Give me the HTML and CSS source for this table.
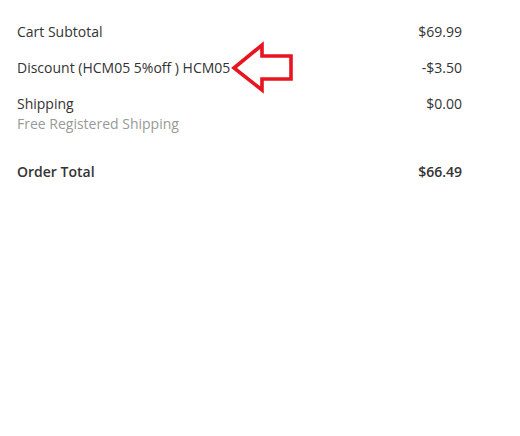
FILE: index.html
```html
<!DOCTYPE html>
<html>
<head>
<meta charset="utf-8">
<link rel="stylesheet" href="styles.css">
</head>
<body>
<div class="totals">
  <div class="row">
    <div class="label">Cart Subtotal</div>
    <div class="amount">$69.99</div>
  </div>
  <div class="row">
    <div class="label">Discount (HCM05 5%off ) HCM05</div>
    <div class="amount">-$3.50</div>
  </div>
  <div class="row">
    <div class="label">Shipping<div class="sub">Free Registered Shipping</div></div>
    <div class="amount">$0.00</div>
  </div>
  <div class="row total">
    <div class="label">Order Total</div>
    <div class="amount">$66.49</div>
  </div>
  <svg class="arrow" width="70" height="56" viewBox="0 0 70 56">
    <polygon points="6,28 34,5 34,16 63,16 63,39 34,39 34,50" fill="none" stroke="#e8141f" stroke-width="3.6" stroke-linejoin="miter"/>
  </svg>
</div>
</body>
</html>
```
FILE: styles.css
```css
html, body {
  margin: 0;
  padding: 0;
  background: #fff;
}
body {
  font-family: "Open Sans", "Liberation Sans", sans-serif;
  font-size: 14px;
  line-height: 20px;
  color: #333;
}
.totals {
  position: relative;
  width: 445px;
  padding: 22px 0 0 17px;
}
.row {
  display: flex;
  justify-content: space-between;
  margin-bottom: 16px;
}
.row.total {
  margin-top: 28px;
  font-weight: 600;
}
.sub {
  color: #999;
}
.amount {
  text-align: right;
}
.arrow {
  position: absolute;
  left: 228px;
  top: 40px;
}
```
